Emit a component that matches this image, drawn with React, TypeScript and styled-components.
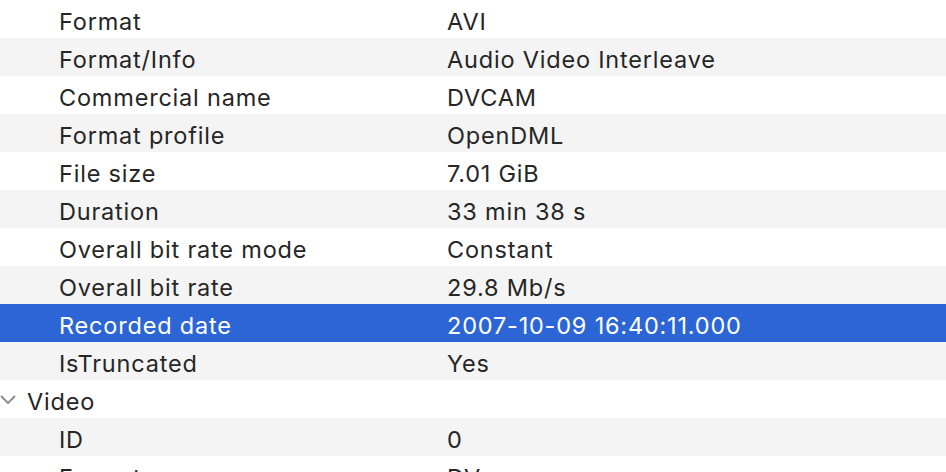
import * as React from "react";
import styled, { createGlobalStyle } from "styled-components";

type Row = { label: string; value?: string; section?: boolean; selected?: boolean };

const rows: Row[] = [
  { label: "Format", value: "AVI" },
  { label: "Format/Info", value: "Audio Video Interleave" },
  { label: "Commercial name", value: "DVCAM" },
  { label: "Format profile", value: "OpenDML" },
  { label: "File size", value: "7.01 GiB" },
  { label: "Duration", value: "33 min 38 s" },
  { label: "Overall bit rate mode", value: "Constant" },
  { label: "Overall bit rate", value: "29.8 Mb/s" },
  { label: "Recorded date", value: "2007-10-09 16:40:11.000", selected: true },
  { label: "IsTruncated", value: "Yes" },
  { label: "Video", section: true },
  { label: "ID", value: "0" },
  { label: "Format", value: "DV" },
];

const GlobalStyle = createGlobalStyle`
  html, body {
    margin: 0;
    padding: 0;
    background: #ffffff;
    overflow: hidden;
  }
`;

export default function App() {
  return (
    <>
      <GlobalStyle />
      <Outline>
        {rows.map((row, i) => (
          <RowLine key={i} $striped={i % 2 === 1} $selected={!!row.selected}>
            {row.section ? (
              <SectionCell>
                <Chevron viewBox="0 0 16 10">
                  <path d="M1.5 1.5 L8 8 L14.5 1.5" fill="none" stroke="#8c8c8c" strokeWidth="1.9" strokeLinecap="round" strokeLinejoin="round" />
                </Chevron>
                <SectionLabel>{row.label}</SectionLabel>
              </SectionCell>
            ) : (
              <>
                <Label>{row.label}</Label>
                <Value>{row.value}</Value>
              </>
            )}
          </RowLine>
        ))}
      </Outline>
    </>
  );
}

const Outline = styled.div`
  width: 946px;
  height: 472px;
  overflow: hidden;
  font-family: Inter, "Noto Sans", sans-serif;
  font-size: 23.5px;
  letter-spacing: 0.8px;
  color: #262626;
`;

const RowLine = styled.div<{ $striped: boolean; $selected: boolean }>`
  display: grid;
  grid-template-columns: 447px 1fr;
  align-items: center;
  height: 38px;
  padding-top: 5px;
  box-sizing: border-box;
  background: ${(p) => (p.$selected ? "#2c66d6" : p.$striped ? "#f4f4f4" : "#ffffff")};
  color: ${(p) => (p.$selected ? "#ffffff" : "#262626")};
`;

const Label = styled.span`
  padding-left: 59px;
  white-space: nowrap;
`;

const Value = styled.span`
  white-space: nowrap;
`;

const SectionCell = styled.div`
  display: flex;
  align-items: center;
  grid-column: 1 / span 2;
`;

const Chevron = styled.svg`
  width: 16px;
  height: 10px;
  margin-left: 0px;
  margin-right: 11px;
  margin-top: -3px;
`;

const SectionLabel = styled.span`
  white-space: nowrap;
`;
